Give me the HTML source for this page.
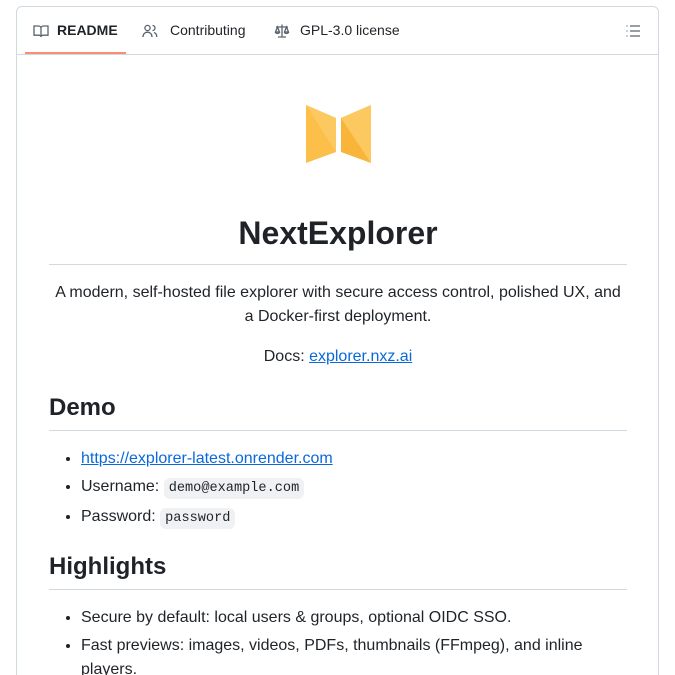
<!DOCTYPE html>
<html><head><meta charset="utf-8"><style>
html,body{margin:0;height:675px;overflow:hidden;}
body{background:#fff;font-family:"Liberation Sans",sans-serif;color:#1f2328;position:relative;}
.box{position:absolute;left:16px;top:6px;width:641px;height:700px;border:1px solid #d1d9e0;border-radius:6px;}
.tabs{height:47px;border-bottom:1px solid #d1d9e0;position:relative;}
.tab{position:absolute;top:0;height:47px;line-height:47px;font-size:14px;color:#1f2328;}
.tab svg{position:absolute;top:16px;}
.ul{position:absolute;left:8px;top:45px;width:101px;height:2px;background:#fd8c73;}
a{color:#0969da;text-decoration:underline;}
.c{position:absolute;left:49px;width:578px;}
h1{margin:0;font-size:32px;font-weight:600;text-align:center;}
h2{margin:0;font-size:24px;font-weight:600;}
.hr{border-bottom:1px solid #d1d9e0;}
p{margin:0;font-size:16px;line-height:24px;}
ul{margin:0;padding-left:32px;font-size:16px;line-height:24px;}
li{margin-bottom:4px;}
code{font-family:"Liberation Mono",monospace;font-size:13.6px;background:#eff1f3;border-radius:6px;padding:3px 5px;}
</style></head><body>
<div class="box">
<div class="tabs">
<div class="tab" style="left:16px"><svg width="16" height="16" viewBox="0 0 16 16" fill="none" stroke="#59636e" stroke-width="1.3"><path d="M1 3h4.5c1.4 0 2.5 1 2.5 2.3V14c0-1-1-1.8-2.2-1.8H1z M15 3h-4.5C9.1 3 8 4 8 5.3V14c0-1 1-1.8 2.2-1.8H15z"/></svg><b style="margin-left:24px">README</b></div>
<div class="ul"></div>
<div class="tab" style="left:125px"><svg width="16" height="16" viewBox="0 0 16 16" fill="none" stroke="#59636e" stroke-width="1.3"><circle cx="5.5" cy="5" r="2.6"/><path d="M1 14c0-3 2-4.8 4.5-4.8S10 11 10 14M10.5 2.5a2.5 2.5 0 010 5M12 9.5c1.8.6 2.8 2.2 2.8 4.5"/></svg><span style="margin-left:28px">Contributing</span></div>
<div class="tab" style="left:257px"><svg width="16" height="16" viewBox="0 0 16 16" fill="none" stroke="#59636e" stroke-width="1.3"><path d="M8 1.5v12M4 14h8M2 4h12M3.5 4L1.5 9h4zM12.5 4l-2 5h4zM1.5 9a2 1.5 0 004 0M10.5 9a2 1.5 0 004 0"/></svg><span style="margin-left:26px">GPL-3.0 license</span></div>
<svg style="position:absolute;left:608px;top:16px" width="16" height="16" viewBox="0 0 16 16" fill="none" stroke="#59636e" stroke-width="1.3"><path d="M5 3h10M5 8h10M5 13h10M1.5 3h1M1.5 8h1M1.5 13h1"/></svg>
</div>
</div>
<svg style="position:absolute;left:300px;top:100px" width="80" height="70" viewBox="300 100 80 70">
<polygon points="306,105 336,118 336,152 306,163" fill="#fbbf4a"/>
<polygon points="306,105 336,118 336,152" fill="#fcc860"/>
<polygon points="371,105 341,118 341,152 371,163" fill="#f9b53a"/>
<polygon points="371,105 341,118 371,163" fill="#fcc860"/>
</svg>
<div class="c" style="top:215px"><h1>NextExplorer</h1></div>
<div class="c hr" style="top:264px"></div>
<div class="c" style="top:281px;text-align:center"><p>A modern, self-hosted file explorer with secure access control, polished UX, and a Docker-first deployment.</p></div>
<div class="c" style="top:345px;text-align:center"><p>Docs: <a>explorer.nxz.ai</a></p></div>
<div class="c" style="top:394px"><h2>Demo</h2></div>
<div class="c hr" style="top:430px"></div>
<div class="c" style="top:447px"><ul><li><a>https://explorer-latest.onrender.com</a></li><li>Username: <code>demo@example.com</code></li><li>Password: <code>password</code></li></ul></div>
<div class="c" style="top:553px"><h2>Highlights</h2></div>
<div class="c hr" style="top:589px"></div>
<div class="c" style="top:606px"><ul><li>Secure by default: local users &amp; groups, optional OIDC SSO.</li><li>Fast previews: images, videos, PDFs, thumbnails (FFmpeg), and inline players.</li></ul></div>
</body></html>
